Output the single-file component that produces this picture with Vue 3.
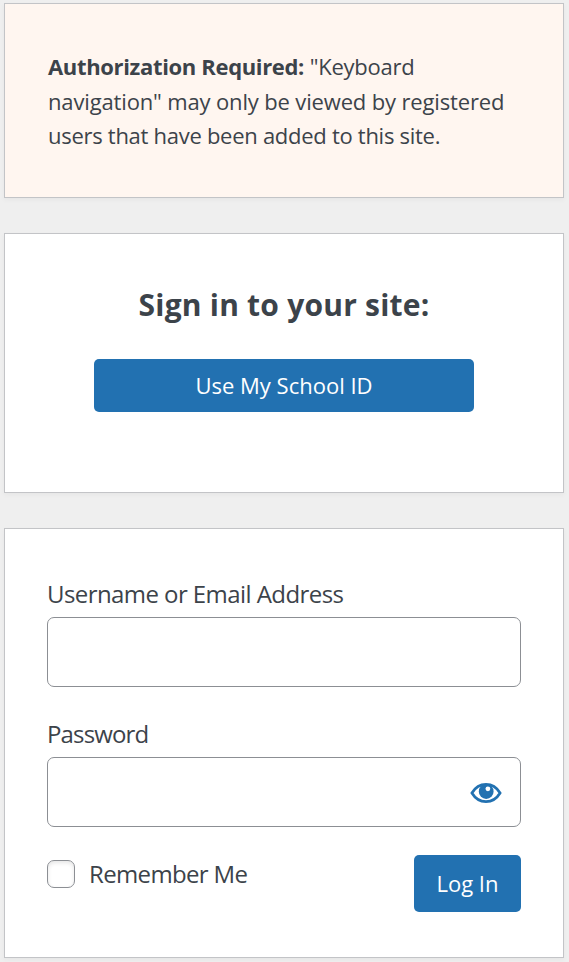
<template>
  <main class="login">
    <section class="card notice">
      <p><strong>Authorization Required:</strong> <span class="l1">"Keyboard</span><br /><span class="l2">navigation" may only be viewed by registered</span><br /><span class="l3">users that have been added to this site.</span></p>
    </section>

    <section class="card sso">
      <h2><span>Sign in to your site:</span></h2>
      <button type="button" class="btn btn-wide"><span>Use My School ID</span></button>
    </section>

    <form class="card form" @submit.prevent>
      <label class="label label-user" for="user"><span>Username or Email Address</span></label>
      <input id="user" v-model="username" class="input" type="text" />

      <label class="label label-pass" for="pass"><span>Password</span></label>
      <div class="password">
        <input id="pass" v-model="password" class="input" :type="visible ? 'text' : 'password'" />
        <button type="button" class="toggle" aria-label="Show password" @click="visible = !visible">
          <svg viewBox="0 0 32 20" aria-hidden="true">
            <path
              class="lid"
              d="M1.9 10C5.2 4.5 10.2 1.4 16 1.4S26.8 4.5 30.1 10C26.8 15.5 21.8 18.6 16 18.6S5.2 15.5 1.9 10Z"
            />
            <circle class="iris" cx="16.2" cy="8.6" r="7.4" />
            <circle class="glint" cx="17.9" cy="5.8" r="2.4" />
          </svg>
        </button>
      </div>

      <div class="footer">
        <label class="remember">
          <input v-model="remember" type="checkbox" />
          <span>Remember Me</span>
        </label>
        <button type="submit" class="btn btn-login"><span>Log In</span></button>
      </div>
    </form>
  </main>
</template>

<script setup>
import { ref } from 'vue'

const username = ref('')
const password = ref('')
const remember = ref(false)
const visible = ref(false)
</script>

<style>
body {
  background: #efefef;
}
</style>

<style scoped>
.login {
  box-sizing: border-box;
  height: 962px;
  overflow: hidden;
  padding: 3px 5px 0 4px;
  display: flex;
  flex-direction: column;
  gap: 35px;
  color: #3c434a;
  font-family: 'Open Sans', 'Noto Sans', sans-serif;
  font-size: 22px;
}

/* Cards */
.card {
  box-sizing: border-box;
  flex: none;
  background: #fff;
  border: 1px solid #c3c4c7;
  box-shadow: 0 2px 5px rgba(0, 0, 0, 0.04);
  padding: 0 42px;
}
.notice {
  height: 195px;
  padding-top: 45px;
  padding-left: 43px;
  background: #fff6f0;
}
.notice p {
  margin: 0;
  line-height: 34.5px;
  white-space: nowrap;
}
.notice strong {
  letter-spacing: -0.34px;
}
.l1 {
  letter-spacing: -0.25px;
}
.l2 {
  letter-spacing: -0.15px;
}
.l3 {
  letter-spacing: -0.28px;
}

.sso {
  height: 260px;
  display: flex;
  flex-direction: column;
  align-items: center;
}
.sso h2 {
  margin: 50px 0 33px;
  font-size: 30px;
  line-height: 42px;
  font-weight: 700;
  letter-spacing: 0.22px;
}

/* Buttons */
.btn {
  border: 0;
  border-radius: 5px;
  padding: 0 0 2px;
  background: #2271b1;
  color: #fff;
  font: inherit;
  cursor: pointer;
}
.btn-wide {
  width: 380px;
  height: 53px;
}
.btn-login {
  width: 107px;
  height: 57px;
}

/* Form */
.form {
  height: 430px;
  display: flex;
  flex-direction: column;
}
.label {
  font-size: 24px;
  line-height: 36px;
  letter-spacing: -0.57px;
}
.label-user {
  margin: 47px 0 5px;
}
.label-pass {
  margin: 29px 0 5px;
  letter-spacing: -0.85px;
}
.input {
  box-sizing: border-box;
  display: block;
  width: 474px;
  height: 70px;
  padding: 0 12px;
  border: 1px solid #8c8f94;
  border-radius: 7px;
  background: #fff;
  font: inherit;
}
.password {
  position: relative;
}
.toggle {
  position: absolute;
  top: 1px;
  right: 0;
  width: 70px;
  height: 70px;
  padding: 0;
  display: grid;
  place-items: center;
  border: 0;
  background: none;
  cursor: pointer;
}
.toggle svg {
  width: 32px;
  height: 20px;
}
.lid {
  fill: none;
  stroke: #2271b1;
  stroke-width: 2.7;
}
.iris {
  fill: #2271b1;
}
.glint {
  fill: #fff;
}
.footer {
  display: flex;
  justify-content: space-between;
  align-items: flex-start;
  margin-top: 28px;
}
.remember {
  display: flex;
  align-items: center;
  gap: 14px;
  height: 38px;
  font-size: 24px;
  letter-spacing: -0.65px;
}
.remember span {
  padding-bottom: 2px;
}
.remember input {
  appearance: none;
  box-sizing: border-box;
  width: 28px;
  height: 28px;
  margin: 0;
  border: 1px solid #8c8f94;
  border-radius: 7px;
  background: #fff;
  box-shadow: inset 0 2px 4px rgba(0, 0, 0, 0.1);
}
</style>
